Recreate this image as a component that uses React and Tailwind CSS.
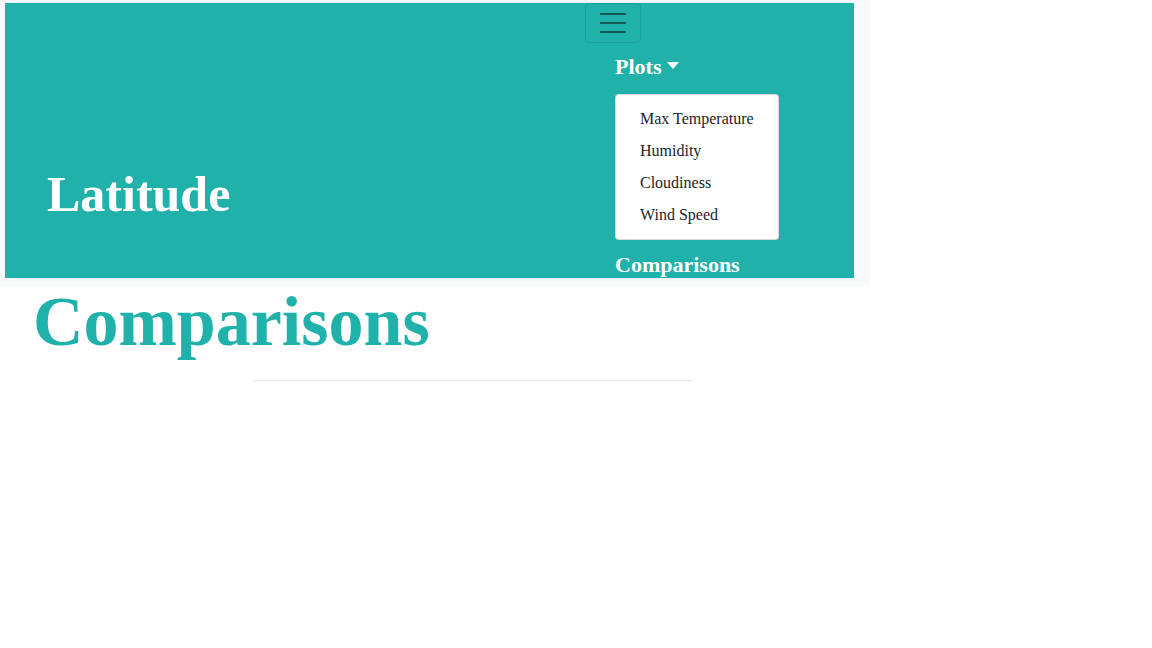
import React from 'react';

export default function App() {
    const items = ['Max Temperature', 'Humidity', 'Cloudiness', 'Wind Speed'];

    return (
        <div className="min-h-screen bg-white font-['Liberation_Serif',serif]">
            {/* Header band */}
            <div className="w-[870px] bg-[#f8f9fa] pt-[3px] pb-[8px] pl-[5px] pr-[16px]">
                <div className="flex h-[275px] bg-[#20b2aa] overflow-hidden">
                    <div className="w-[580px] pl-[42px] pt-[166px]">
                        <h1 className="text-[50px] font-bold leading-none text-white">Latitude</h1>
                    </div>
                    <div className="flex flex-col">
                        <button className="flex h-[40px] w-[56px] flex-col items-center justify-center gap-[7px] rounded border border-black/10">
                            <span className="block h-[2px] w-[26px] bg-black/50"></span>
                            <span className="block h-[2px] w-[26px] bg-black/50"></span>
                            <span className="block h-[2px] w-[26px] bg-black/50"></span>
                        </button>
                        <div className="ml-[30px] mt-[11px] flex items-center gap-[6px] text-[22px] font-bold leading-[26px] text-white">
                            Plots
                            <span className="mt-[-3px] h-0 w-0 border-x-[6px] border-t-[7px] border-x-transparent border-t-white"></span>
                        </div>
                        <div className="ml-[30px] mt-[14px] w-[164px] rounded border border-black/15 bg-white py-[8px]">
                            {items.map((item) => (
                                <div key={item} className="px-[24px] py-[6px] text-[16px] leading-[20px] text-[#212529]">
                                    {item}
                                </div>
                            ))}
                        </div>
                        <div className="ml-[30px] mt-[12px] text-[22px] font-bold leading-[26px] text-white">Comparisons</div>
                    </div>
                </div>
            </div>

            {/* Page title */}
            <h2 className="pl-[33px] text-[70px] font-bold leading-[72px] text-[#20b2aa]">Comparisons</h2>
            <hr className="ml-[253px] mt-[22px] w-[440px] border-t border-[#e5e5e5]" />
        </div>
    );
}
